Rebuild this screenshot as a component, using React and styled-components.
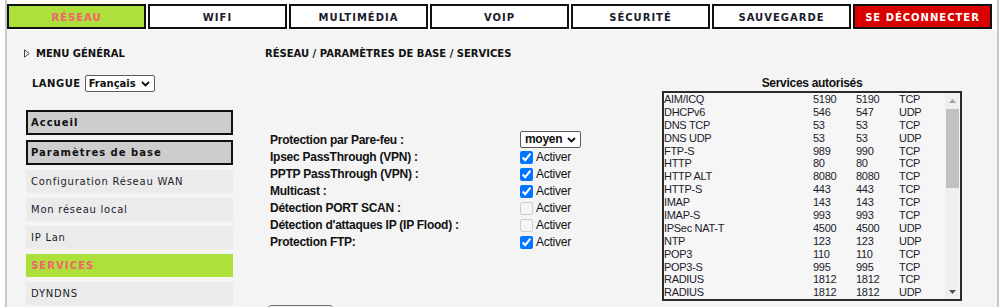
import React from 'react'
import styled, { createGlobalStyle } from 'styled-components'

const GlobalStyle = createGlobalStyle`
  body {
    margin: 0;
    background: #ffffff;
    font-family: "DejaVu Sans", Verdana, sans-serif;
  }
`

const Page = styled.div`
  margin-left: 5px;
  width: 990px;
  min-height: 307px;
  border-left: 2px solid #c8c8c8;
  border-right: 2px solid #c8c8c8;
  background: #f4f4f4;
`

const Nav = styled.div`
  display: flex;
  gap: 2px;
  padding-top: 4px;
  height: 26px;
  background: #ffffff;
`

const Tab = styled.div`
  box-sizing: border-box;
  width: 139px;
  height: 25px;
  padding-top: 1px;
  border: 2px solid #111;
  display: flex;
  align-items: center;
  justify-content: center;
  font-size: 10px;
  font-weight: bold;
  letter-spacing: 1px;
  color: ${p => (p.$active ? '#f0646e' : p.$danger ? '#ffffff' : '#1b1b2b')};
  background: ${p => (p.$active ? '#aee03b' : p.$danger ? '#d80000' : '#ffffff')};
`

const Body = styled.div`
  display: flex;
`

const Sidebar = styled.div`
  box-sizing: border-box;
  width: 258px;
  padding: 17px 0 0 17px;
  display: flex;
  flex-direction: column;
`

const MenuTitle = styled.div`
  display: flex;
  align-items: center;
  gap: 6px;
  height: 12px;
  font-size: 10px;
  font-weight: bold;
  color: #111;
`

const LangRow = styled.div`
  display: flex;
  align-items: center;
  gap: 4px;
  margin: 16px 0 0 8px;
  font-size: 10px;
  font-weight: bold;
  letter-spacing: 0.5px;
  color: #111;
`

const SelectWrap = styled.div`
  position: relative;
  display: flex;
  justify-self: start;
  width: fit-content;
`

const Select = styled.select`
  appearance: none;
  -webkit-appearance: none;
  box-sizing: border-box;
  width: ${p => p.$w}px;
  height: 17px;
  margin: 0;
  padding: 0 0 0 ${p => p.$pl}px;
  border: 1px solid #5a5a5a;
  border-radius: 2px;
  background: #ffffff;
  color: #111;
  font-family: ${p => p.$font};
  font-size: ${p => p.$fs}px;
  font-weight: bold;
  letter-spacing: ${p => p.$ls}px;
  line-height: 15px;
`

const Chevron = styled.svg`
  position: absolute;
  right: 5px;
  top: 6px;
  pointer-events: none;
`

const Menu = styled.div`
  display: flex;
  flex-direction: column;
  gap: 5px;
  width: 207px;
  margin: 18px 0 0 2px;
`

const MenuBox = styled.div`
  box-sizing: border-box;
  height: 25px;
  padding-left: 3px;
  border: 2px solid #111;
  background: #cdcdcd;
  display: flex;
  align-items: center;
  font-size: 10px;
  font-weight: bold;
  letter-spacing: 1px;
  color: #111;
`

const SubItem = styled.div`
  box-sizing: border-box;
  height: 23px;
  padding-left: 5px;
  display: flex;
  align-items: center;
  font-size: 10px;
  letter-spacing: ${p => (p.$active ? '1.1px' : '0.75px')};
  font-weight: ${p => (p.$active ? 'bold' : 'normal')};
  color: ${p => (p.$active ? '#f0646e' : '#1b1b2b')};
  background: ${p => (p.$active ? '#aee03b' : '#ebebeb')};
`

const Main = styled.div`
  flex: 1;
  padding-top: 18px;
`

const Heading = styled.div`
  height: 12px;
  line-height: 12px;
  font-size: 10px;
  font-weight: bold;
  color: #111;
`

const Content = styled.div`
  display: flex;
  margin-top: 16px;
`

const Form = styled.div`
  box-sizing: border-box;
  width: 397px;
  padding: 55px 0 0 5px;
  font-family: "Liberation Sans", Arial, sans-serif;
  font-size: 12px;
  letter-spacing: -0.25px;
  color: #111;
`

const FormGrid = styled.div`
  display: grid;
  grid-template-columns: 250px auto;
  grid-auto-rows: 17px;
  align-items: center;
`

const Label = styled.div`
  font-weight: bold;
`

const Check = styled.label`
  display: flex;
  align-items: center;
  gap: 3px;
  color: #111;

  input {
    width: 13px;
    height: 13px;
    margin: 2px 0 0 0;
  }
`

const Button = styled.button`
  display: block;
  margin: 55px 0 0 -2px;
  width: 65px;
  height: 22px;
  border: 1px solid #767676;
  border-radius: 3px;
  background: #efefef;
`

const Services = styled.div`
  width: 300px;
  font-family: "Liberation Sans", Arial, sans-serif;
  color: #111;
`

const ServicesTitle = styled.div`
  height: 15px;
  line-height: 14px;
  text-align: center;
  font-size: 12px;
  font-weight: bold;
  letter-spacing: -0.3px;
`

const ListBox = styled.div`
  box-sizing: border-box;
  height: 210px;
  border: 2px solid #2a2a2a;
  background: #f6f6f6;
  display: flex;
`

const Rows = styled.div`
  flex: 1;
  overflow: hidden;
`

const Row = styled.div`
  display: grid;
  grid-template-columns: 149px 43px 43px 1fr;
  height: 12.9px;
  line-height: 13px;
  font-size: 11px;
  letter-spacing: -0.3px;
  color: #1b1b2b;
`

const ScrollBar = styled.div`
  width: 14px;
  margin-right: 1px;
  background: #f0f0f0;
  display: flex;
  flex-direction: column;
  align-items: center;
`

const ArrowBtn = styled.div`
  height: 15px;
  display: flex;
  align-items: center;
  justify-content: center;
`

const Thumb = styled.div`
  width: 13px;
  height: 79px;
  margin-top: 1px;
  background: #c1c1c1;
`

const Track = styled.div`
  flex: 1;
`

const tabs = ['RÉSEAU', 'WIFI', 'MULTIMÉDIA', 'VOIP', 'SÉCURITÉ', 'SAUVEGARDE', 'SE DÉCONNECTER']

const subItems = ['Configuration Réseau WAN', 'Mon réseau local', 'IP Lan', 'SERVICES', 'DYNDNS']

const options = [
  ['Ipsec PassThrough (VPN) :', true],
  ['PPTP PassThrough (VPN) :', true],
  ['Multicast :', true],
  ['Détection PORT SCAN :', false],
  ["Détection d'attaques IP (IP Flood) :", false],
  ['Protection FTP:', true],
]

const services = [
  ['AIM/ICQ', '5190', '5190', 'TCP'],
  ['DHCPv6', '546', '547', 'UDP'],
  ['DNS TCP', '53', '53', 'TCP'],
  ['DNS UDP', '53', '53', 'UDP'],
  ['FTP-S', '989', '990', 'TCP'],
  ['HTTP', '80', '80', 'TCP'],
  ['HTTP ALT', '8080', '8080', 'TCP'],
  ['HTTP-S', '443', '443', 'TCP'],
  ['IMAP', '143', '143', 'TCP'],
  ['IMAP-S', '993', '993', 'TCP'],
  ['IPSec NAT-T', '4500', '4500', 'UDP'],
  ['NTP', '123', '123', 'UDP'],
  ['POP3', '110', '110', 'TCP'],
  ['POP3-S', '995', '995', 'TCP'],
  ['RADIUS', '1812', '1812', 'TCP'],
  ['RADIUS', '1812', '1812', 'UDP'],
]

const VERDANA = '"DejaVu Sans", Verdana, sans-serif'
const ARIAL = '"Liberation Sans", Arial, sans-serif'

function ChevronIcon() {
  return (
    <Chevron width="9" height="6" viewBox="0 0 9 6">
      <path d="M1 1 L4.5 4.5 L8 1" fill="none" stroke="#111" strokeWidth="1.8" />
    </Chevron>
  )
}

function Arrow({ down, color }) {
  return (
    <svg width="7" height="4" viewBox="0 0 7 4">
      <path d={down ? 'M0 0 L7 0 L3.5 4 Z' : 'M0 4 L7 4 L3.5 0 Z'} fill={color} />
    </svg>
  )
}

export default function App() {
  return (
    <>
      <GlobalStyle />
      <Page>
        <Nav>
          {tabs.map((t, i) => (
            <Tab key={t} $active={i === 0} $danger={i === tabs.length - 1}>{t}</Tab>
          ))}
        </Nav>
        <Body>
          <Sidebar>
            <MenuTitle>
              <svg width="6" height="9" viewBox="0 0 6 9">
                <path d="M0.5 0.8 L5.2 4.5 L0.5 8.2 Z" fill="none" stroke="#444" strokeWidth="1" />
              </svg>
              MENU GÉNÉRAL
            </MenuTitle>
            <LangRow>
              LANGUE
              <SelectWrap>
                <Select $w={70} $pl={3} $fs={10} $ls={0} $font={VERDANA} defaultValue="fr">
                  <option value="fr">Français</option>
                  <option value="en">English</option>
                </Select>
                <ChevronIcon />
              </SelectWrap>
            </LangRow>
            <Menu>
              <MenuBox>Accueil</MenuBox>
              <MenuBox>Paramètres de base</MenuBox>
              {subItems.map(s => (
                <SubItem key={s} $active={s === 'SERVICES'}>{s}</SubItem>
              ))}
            </Menu>
          </Sidebar>
          <Main>
            <Heading>RÉSEAU / PARAMÈTRES DE BASE / SERVICES</Heading>
            <Content>
              <Form>
                <FormGrid>
                  <Label>Protection par Pare-feu :</Label>
                  <SelectWrap>
                    <Select $w={61} $pl={4} $fs={12} $ls={-0.3} $font={ARIAL} defaultValue="moyen">
                      <option value="bas">bas</option>
                      <option value="moyen">moyen</option>
                      <option value="haut">haut</option>
                    </Select>
                    <ChevronIcon />
                  </SelectWrap>
                  {options.map(([label, on]) => (
                    <React.Fragment key={label}>
                      <Label>{label}</Label>
                      <Check>
                        <input type="checkbox" defaultChecked={on} disabled={!on} />
                        Activer
                      </Check>
                    </React.Fragment>
                  ))}
                </FormGrid>
                <Button aria-label="Appliquer" />
              </Form>
              <Services>
                <ServicesTitle>Services autorisés</ServicesTitle>
                <ListBox>
                  <Rows>
                    {services.map((r, i) => (
                      <Row key={i}>
                        {r.map((c, j) => <span key={j}>{c}</span>)}
                      </Row>
                    ))}
                  </Rows>
                  <ScrollBar>
                    <ArrowBtn><Arrow color="#a3a3a3" /></ArrowBtn>
                    <Thumb />
                    <Track />
                    <ArrowBtn><Arrow down color="#505050" /></ArrowBtn>
                  </ScrollBar>
                </ListBox>
              </Services>
            </Content>
          </Main>
        </Body>
      </Page>
    </>
  )
}
